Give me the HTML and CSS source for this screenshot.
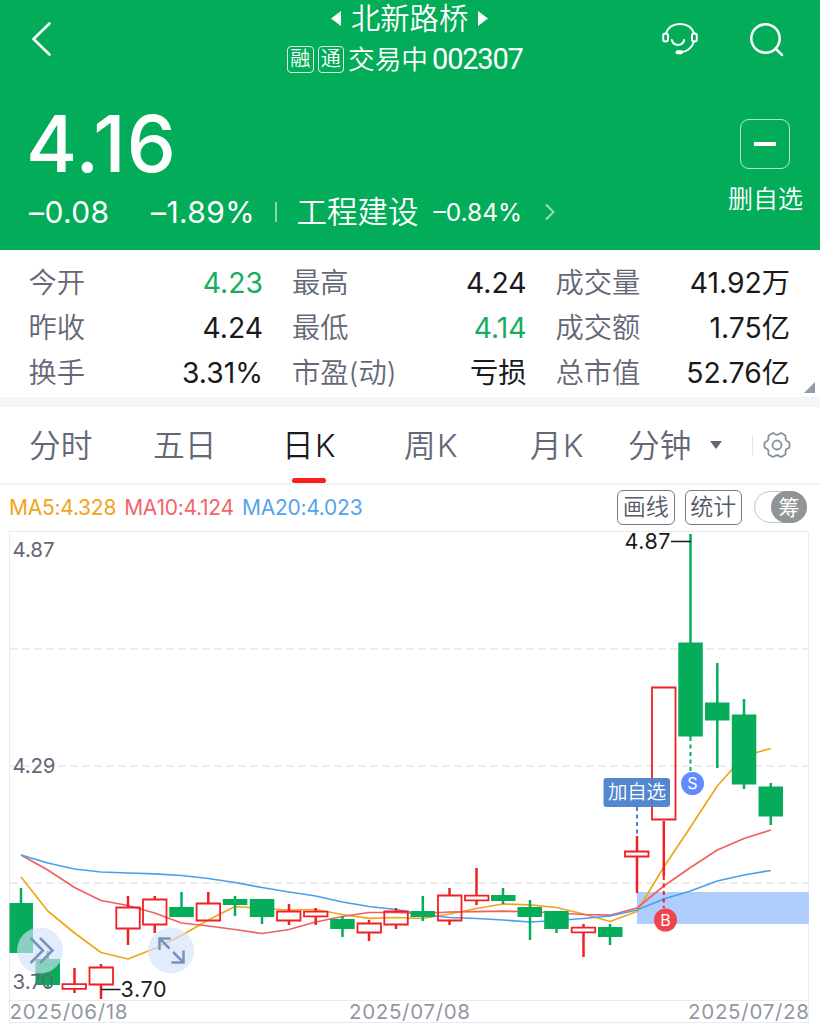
FILE: index.html
```html
<!DOCTYPE html>
<html lang="zh-CN">
<head>
<meta charset="utf-8">
<title>北新路桥 002307</title>
<link rel="stylesheet" href="styles.css">
</head>
<body>
<header class="hero">
  <div class="topbar">
    <svg class="back" width="24" height="40" viewBox="0 0 24 40"><path d="M18.500 4.500 2.500 20l16 15.500"/></svg>
    <div class="heading">
      <div class="name"><svg width="10" height="15"><path d="M10 0v15L0 7.500z"/></svg><h1>北新路桥</h1><svg width="10" height="15"><path d="M0 0v15l10-7.500z"/></svg></div>
      <div class="status"><span class="tag">融</span><span class="tag">通</span><span class="state">交易中</span><span class="code">002307</span></div>
    </div>
    <div class="actions">
      <svg class="service" width="36" height="34" viewBox="0 0 36 34"><path d="M4 11.500C6 5.300 11.500 2 18 2s12 3.300 14 9.500M32 19.500c-1.800 6-7 10.300-13.500 10.800M9.800 18c1.600 6.500 10.800 6.500 12.400 0"/><rect x="1.200" y="11.500" width="4.800" height="8" rx="2.200"/><rect x="30" y="11.500" width="4.800" height="8" rx="2.200"/><path class="mic" d="M15.500 30.300h3.500"/></svg>
      <svg class="search" width="36" height="36" viewBox="0 0 36 36"><circle cx="16.500" cy="16.500" r="14.200"/><path d="m26.500 26.500 6.500 6.500"/></svg>
    </div>
  </div>
  <div class="quote">
    <div class="price">4.16</div>
    <div class="remove"><span class="minus"></span><span class="remove-label">删自选</span></div>
  </div>
  <div class="change">
    <span class="delta">–0.08</span><span class="pct">–1.89%</span><span class="bar"></span><span class="sector">工程建设</span><span class="sector-pct">–0.84%</span>
    <svg width="12" height="18" viewBox="0 0 12 18"><path d="m2 1.500 7.500 7.500L2 16.500"/></svg>
  </div>
</header>

<section class="stats">
  <div class="stat"><span>今开</span><b class="down">4.23</b></div>
  <div class="stat"><span>最高</span><b>4.24</b></div>
  <div class="stat"><span>成交量</span><b>41.92万</b></div>
  <div class="stat"><span>昨收</span><b>4.24</b></div>
  <div class="stat"><span>最低</span><b class="down">4.14</b></div>
  <div class="stat"><span>成交额</span><b>1.75亿</b></div>
  <div class="stat"><span>换手</span><b>3.31%</b></div>
  <div class="stat"><span>市盈(动)</span><b>亏损</b></div>
  <div class="stat"><span>总市值</span><b>52.76亿</b></div>
  <i class="corner"></i>
</section>

<nav class="tabs">
  <span class="tab t1">分时</span><span class="tab t2">五日</span><span class="tab t3 active">日K</span><span class="tab t4">周K</span><span class="tab t5">月K</span><span class="tab t6">分钟</span>
  <svg class="caret" width="12" height="8"><path d="M0 0h12L6 8z"/></svg>
  <i class="split"></i>
  <svg class="gear" width="28" height="28" viewBox="0 0 28 28"><path d="M9.500 2.200Q10.500 1.800 11.300 2.600Q14 5 16.700 2.600Q17.500 1.800 18.500 2.200L22 4.300Q22.800 5 22.600 6Q22 9.800 25.500 10.800Q26.400 11.200 26.500 12.200V15.800Q26.400 16.800 25.500 17.200Q22 18.200 22.600 22Q22.800 23 22 23.700L18.500 25.800Q17.500 26.200 16.700 25.400Q14 23 11.300 25.400Q10.500 26.200 9.500 25.800L6 23.700Q5.200 23 5.400 22Q6 18.200 2.500 17.200Q1.600 16.800 1.500 15.800V12.200Q1.600 11.200 2.500 10.800Q6 9.800 5.400 6Q5.200 5 6 4.300Z"/><circle cx="14" cy="14" r="4.500"/></svg>
</nav>

<div class="legend">
  <span class="ma ma5">MA5:4.328</span><span class="ma ma10">MA10:4.124</span><span class="ma ma20">MA20:4.023</span>
  <div class="tools"><span class="tool">画线</span><span class="tool">统计</span><span class="toggle"><span class="knob">筹</span></span></div>
</div>

<svg class="chart" width="820" height="496" viewBox="0 528 820 496">
  <path class="frame" d="M9.500 532V1022.500M808.500 532V1022.500M9 531.500H809M9 1000.500H809M9 1022.500H809"/>
  <path class="grid" d="M10 649H808M10 766H808M10 883H808"/>
  <rect class="zone" x="637" y="892" width="172" height="32"/>
  <g class="line">
    <path class="s5" d="M21 877 47.800 911 74.500 933 101 952.500 128 959 154.700 948.500 181.500 935.500 208.300 920 235 906.500 262 908.500 289 910 315.700 909.500 342.500 914.500 369 918.300 396 917.500 422.800 918.500 449.500 914 476.500 908.500 503 904 530 904.800 556.500 907.500 583.500 914 610 921.500 637 911.500 663.800 867 690.500 827 717.300 786 744 756 770.800 748.500"/>
    <path class="s10" d="M21 855 47.800 870 74.500 887.500 101 900.500 128 905.500 154.700 913 181.500 923 208.300 926 235 929.500 262 933.500 289 929.500 315.700 922 342.500 916.500 369 912.500 396 912.500 422.800 913.500 449.500 912 476.500 911.700 503 911.200 530 911.700 556.500 913 583.500 914.500 610 915.200 637 908 663.800 886 690.500 867.500 717.300 850 744 838.500 770.800 830"/>
    <path class="s20" d="M21 855 47.800 863 74.500 869 101 872 128 873 154.700 873.800 181.500 875.500 208.300 878.500 235 882.500 262 887.500 289 892 315.700 896 342.500 902 369 906.500 396 909.500 422.800 914.500 449.500 917.500 476.500 918.500 503 920 530 922 556.500 920.500 583.500 918.500 610 916 637 910 663.800 899 690.500 891 717.300 881 744 875 770.800 870.500"/>
  </g>
  <g class="fall">
    <path d="M21 888V905M47.800 951V988M181.500 892V915M235 896V916M262 900V924M342.500 916V937M422.800 896V921M503 888V904M530 900V940M556.500 912V933M610 924V945M690.500 534V737M717.300 663V768M744 699V789M770.800 783V825"/>
    <path class="body" d="M9.500 903h23.500v50h-23.500zM35.500 959h24.500v26h-24.500zM169.300 907h24.500v10h-24.500zM222.800 899h24.500v6h-24.500zM249.800 899h24.500v18h-24.500zM330.200 919h24.500v10h-24.500zM410.500 911h24.500v6h-24.500zM491 895h24.500v6h-24.500zM517.500 907h24.500v10h-24.500zM544.200 911h24.500v18h-24.500zM598 927h24.500v10h-24.500zM678.300 642.500h24.500v94h-24.500zM705 702.500h24.500v18h-24.500zM731.800 714.500h24.500v70h-24.500zM758.500 786.500h24.500v30h-24.500z"/>
  </g>
  <g class="rise">
    <path d="M74.500 968V984M74.500 989V993M101 964V967M101 985V999M128 896V907M128 929V945M154.700 896V899M154.700 925V933M208.300 892V903M289 904V911M289 921V925M315.700 908V911M315.700 917V925M369 920V923M369 933V941M396 908V911M396 925V929M449.500 888V895M449.500 921V925M476.500 868V895M476.500 901V905M583.500 924V927M583.500 933V957M637 836V851M637 857V893M663.800 821V876"/>
    <path class="hollow" d="M62.500 984.200h23.500v4.600h-23.500zM89.500 967.500h23.500v17h-23.500zM116.300 907.500h23.500v21h-23.500zM143 899.500h23.500v25h-23.500zM196.600 903.500h23.500v17h-23.500zM277 911.500h23.500v9h-23.500zM304 911.700h23.500v4.600h-23.500zM357.500 923.500h23.500v9h-23.500zM384.300 911.500h23.500v13h-23.500zM438 895.500h23.500v25h-23.500zM465 895.700h23.500v4.600h-23.500zM571.700 927.700h23.500v4.600h-23.500zM625 851.500h23.500v5h-23.500zM652 687.500h23.500v132h-23.500z"/>
  </g>
  <path class="dash green" d="M690.500 737V773"/>
  <path class="dash red" d="M663.800 876V908"/>
  <path class="dash blue" d="M637 807V836"/>
  <rect class="note" x="603.500" y="778" width="66.500" height="29" rx="3"/>
  <text class="note-text" x="608" y="799" textLength="58">加自选</text>
  <circle class="sell" cx="692.500" cy="783.500" r="11.500"/><text class="mark" x="692.500" y="789">S</text>
  <circle class="buy" cx="665.500" cy="920" r="11.500"/><text class="mark" x="665.500" y="925.500">B</text>
  <circle class="bubble" cx="40" cy="950.500" r="23"/>
  <path class="glyph" d="m30.500 938 12.500 12.500-12.500 12.500M40 938l12.500 12.500L40 963"/>
  <circle class="bubble" cx="171" cy="950.500" r="23"/>
  <path class="glyph" d="m160 939 9.500 9.500M159.500 950V938.500H170.500M173 952l9.500 9.500M183.500 950.500V962.500H171.500"/>
  <path class="tick" d="M671 541.500H691M101 989.500H120.500"/>
  <text class="axis" x="12.500" y="557" textLength="42">4.87</text>
  <text class="axis" x="12.500" y="773" textLength="43">4.29</text>
  <text class="axis" x="12.500" y="989" textLength="42">3.70</text>
  <text class="axis peak" x="624.500" y="549" textLength="46">4.87</text>
  <text class="axis peak" x="120.500" y="997" textLength="46">3.70</text>
  <text class="date" x="9.500" y="1019" textLength="118">2025/06/18</text>
  <text class="date" x="349" y="1019" textLength="121">2025/07/08</text>
  <text class="date" x="688" y="1019" textLength="121">2025/07/28</text>
</svg>
</body>
</html>
```

FILE: styles.css
```css
* { box-sizing: border-box; }
body { margin: 0; width: 820px; height: 1024px; overflow: hidden; background: #fff; color: #1a1a1c; font-family: Inter, "Noto Sans CJK SC", sans-serif; font-weight: 350; white-space: nowrap; }
svg { display: block; flex: none; }
h1 { margin: 0; font-weight: 350; font-size: 29.3px; line-height: 38px; }

.hero { height: 249.500px; background: #03ac59; color: #fff; }
.topbar { height: 80px; display: grid; grid-template-columns: 287px 237px 1fr; }
.back { margin: 19px 0 0 31px; fill: none; stroke: #fff; stroke-width: 2.6; stroke-linecap: round; stroke-linejoin: round; }
.name { height: 38px; display: flex; align-items: center; padding-left: 44px; gap: 10px; }
.name svg { fill: #fff; margin-bottom: 2px; }
.status { display: flex; align-items: center; height: 43px; }
.tag { width: 26.500px; height: 27px; margin-right: 4px; border: 1.300px solid #d9f3e5; border-radius: 4px; font-size: 20px; line-height: 25px; text-align: center; }
.state { font-size: 26.700px; line-height: 43px; }
.code { margin-left: 4px; font: 400 29px/43px Roboto, sans-serif; letter-spacing: -1.200px; }
.actions { display: flex; padding: 22px 0 0 138px; gap: 50.500px; }
.actions svg { fill: none; stroke: #fff; stroke-width: 2; stroke-linecap: round; }
.actions .search { stroke-width: 2.500; }
.actions .mic { stroke-width: 4; }
.quote { height: 110px; display: flex; justify-content: space-between; padding: 0 17px 0 26px; }
.price { font-size: 78px; font-weight: 500; line-height: 94px; padding-top: 17px; letter-spacing: 1px; }
.remove { display: flex; flex-direction: column; align-items: center; padding-top: 39px; font-size: 25px; }
.minus { width: 50px; height: 50px; flex: none; border: 1.500px solid #b6e7cd; border-radius: 9px; display: grid; place-items: center; }
.minus::before { content: ""; width: 22px; height: 4px; background: #fff; }
.remove-label { line-height: 36px; margin-top: 12px; }
.change { display: flex; align-items: center; height: 44px; padding-left: 29px; }
.delta, .pct { width: 122px; font-size: 30px; font-weight: 400; letter-spacing: .4px; }
.pct { width: 124px; }
.bar { width: 1.500px; height: 20px; background: #8ad7af; }
.sector { margin-left: 20px; font-size: 30.500px; line-height: 44px; }
.sector-pct { width: 110px; margin-left: 15px; font-size: 24.500px; font-weight: 400; }
.change svg { fill: none; stroke: #a6e0c2; stroke-width: 1.800; }

.stats { position: relative; height: 147.500px; padding: 11px 30px 0 28.500px; display: grid; grid-template-columns: repeat(3, 234.500px); grid-auto-rows: 45px; column-gap: 29px; }
.stat { display: flex; justify-content: space-between; align-items: center; font-size: 28.300px; line-height: 45px; color: #646876; }
.stat b { font-weight: 400; color: #1a1a1c; }
.stat b.down { color: #16ad5f; }
.corner { position: absolute; right: 5px; bottom: 4px; border-left: 11px solid transparent; border-bottom: 11px solid #929bab; }

.tabs { height: 88px; border-top: 10px solid #f4f5f8; border-bottom: 2px solid #f1f2f4; display: flex; align-items: center; padding-left: 29px; font-size: 31.700px; line-height: 76px; color: #646876; }
.tab { position: relative; flex: none; padding-top: 1px; height: 76px; }
.t1 { width: 124px; }
.t2 { width: 129px; }
.t3 { width: 122px; }
.t4 { width: 126px; }
.t5 { width: 98px; }
.t6 { width: 82px; }
.t3, .t4, .t5 { letter-spacing: 1.200px; }
.active { color: #1a1a1c; }
.active::after { content: ""; position: absolute; left: 10px; bottom: 0; width: 34px; height: 5px; border-radius: 3px; background: #f81e20; }
.caret { fill: #646876; }
.split { width: 1px; height: 20px; margin: 0 10px 0 30px; background: #e4e6ea; }
.gear { fill: none; stroke: #8790a0; stroke-width: 1.800; stroke-linejoin: round; }

.legend { height: 43px; display: flex; align-items: center; padding: 1px 13px 0 9px; font-size: 21px; }
.ma { font-weight: 400; letter-spacing: -.25px; margin-right: 8px; }
.ma5 { color: #f0a51c; }
.ma10 { color: #f0666a; }
.ma20 { color: #56a4ec; }
.tools { margin-left: auto; display: flex; align-items: center; gap: 10px; color: #565a68; }
.tool { width: 57.500px; height: 35px; border: 1.500px solid #777b86; border-radius: 6px; font-size: 23px; line-height: 33px; text-align: center; }
.toggle { width: 53px; height: 32px; margin-left: 2px; border: 1px solid #c4c7cb; border-radius: 16px; display: flex; justify-content: flex-end; align-items: center; }
.knob { width: 36px; height: 32px; flex: none; margin-right: -1px; border-radius: 16px; background: #8f9596; color: #fff; font-size: 21px; line-height: 33px; text-align: center; font-weight: 400; }

.frame { fill: none; stroke: #e9ebef; }
.grid { fill: none; stroke: #e6e8ea; stroke-width: 1.300; stroke-dasharray: 8 4; }
.zone { fill: #b0cefd; }
.line { fill: none; stroke-width: 1.700; stroke-linejoin: round; }
.s5 { stroke: #f0a51c; }
.s10 { stroke: #f0605f; }
.s20 { stroke: #4a9fec; }
.fall { fill: none; stroke: #05ac59; stroke-width: 2.500; }
.fall .body { fill: #05ac59; stroke: none; }
.rise { fill: none; stroke: #f02024; stroke-width: 2.500; }
.rise .hollow { stroke-width: 1.800; }
.dash { stroke-width: 2; stroke-dasharray: 4 3.500; }
.green { stroke: #05ac59; }
.red { stroke: #f02024; }
.blue { stroke: #4e80d0; }
.note { fill: #4a7fce; fill-opacity: .94; }
.note-text { fill: #fff; font-size: 19.500px; }
.sell { fill: #628bff; }
.buy { fill: #ee444c; }
.mark { fill: #fff; font-size: 16px; font-weight: 400; text-anchor: middle; }
.bubble { fill: #d3e2fb; fill-opacity: .65; }
.glyph { fill: none; stroke: #7892bd; stroke-width: 2.500; }
.tick { stroke: #1a1a1c; stroke-width: 1.500; }
.axis { fill: #646876; font-size: 20.500px; font-weight: 400; }
.peak { fill: #1a1a1c; font-size: 21.500px; }
.date { fill: #9298a5; font-size: 20.500px; font-weight: 400; }
```
